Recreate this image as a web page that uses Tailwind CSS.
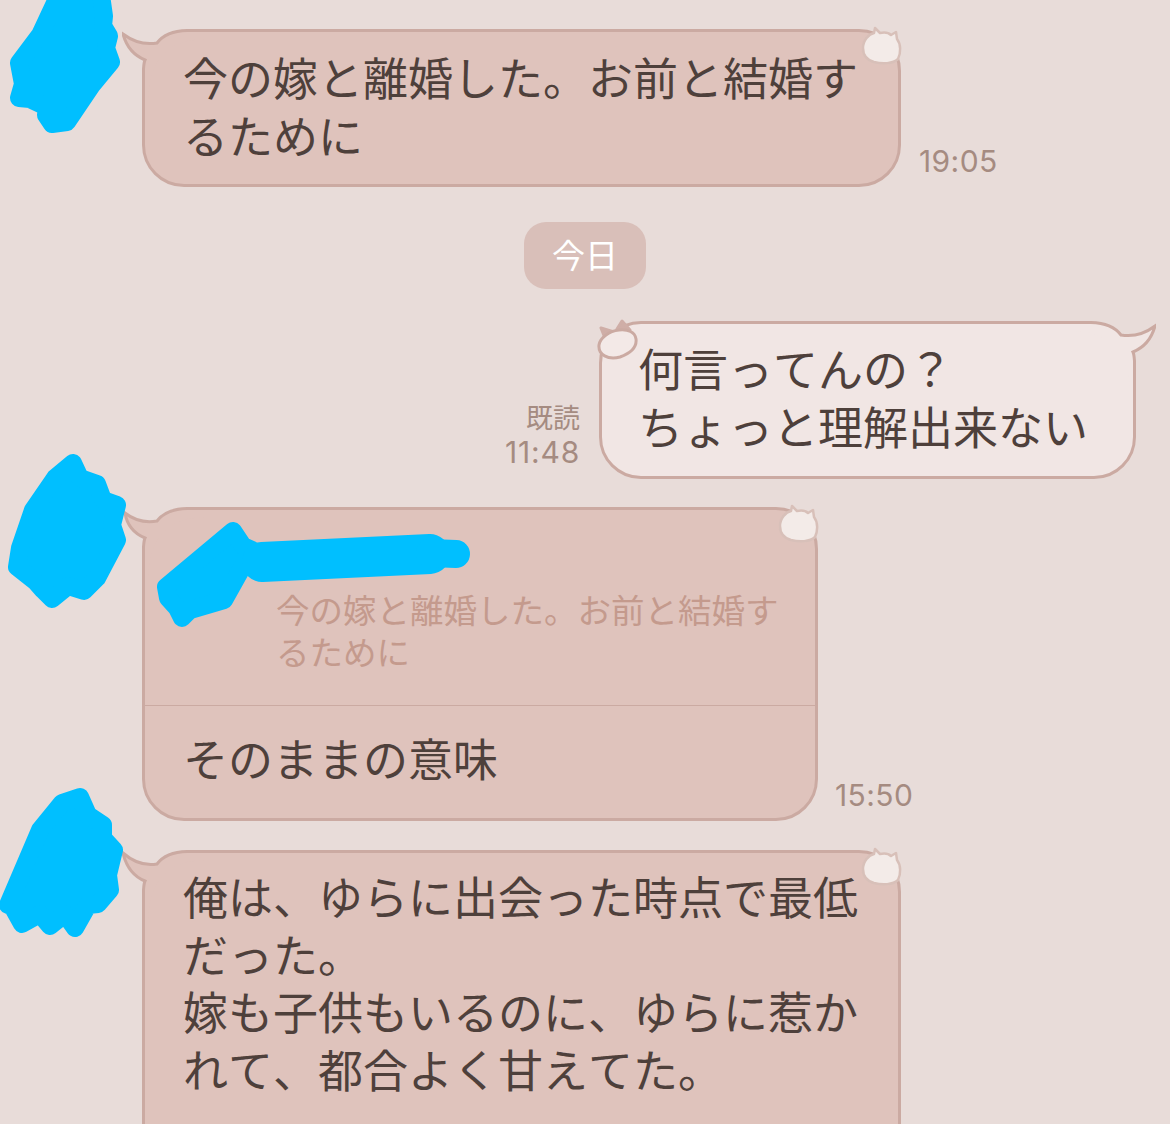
<!DOCTYPE html>
<html lang="ja">
<head>
    <meta charset="UTF-8">
    <title>Chat</title>
    <script src="https://cdn.jsdelivr.net/npm/@tailwindcss/browser@4"></script>
</head>
<body class="bg-[#e8dcd9]">
<div class="relative w-[1170px] h-[1124px] overflow-hidden flex flex-col pt-[29px] font-['Noto_Sans_CJK_JP','Noto_Sans',sans-serif] text-[#4e403b] [font-kerning:none] [text-spacing-trim:space-all]">

    <!-- message 1 -->
    <div class="flex items-end pl-[142px]">
        <div class="relative w-[759px] h-[158px] bg-[#dfc3bc] border-[3px] border-[#cbaaa2] rounded-[42px] rounded-tl-[60px] pl-[38px] pt-[16px] text-[45px] leading-[57.5px] whitespace-nowrap">
            <svg class="absolute left-[-23px] top-[-3px]" width="90" height="72" viewBox="0 0 90 72"><path d="M21.5 70 L21.5 40 Q22 33 23 31 Q6 24 1 5 Q17 17 35 14 Q44 2 65 1.5 L85 1.5 L85 10 Q28 10 26 70 Z" fill="#dfc3bc"/><path d="M21.5 70 L21.5 40 Q22 33 23 31 Q6 24 1 5 Q17 17 35 14 Q44 2 65 1.5 L85 1.5" fill="none" stroke="#cbaaa2" stroke-width="3"/></svg>
            <svg class="absolute right-[-6px] top-[-6px]" width="44" height="40" viewBox="0 0 44 40"><path d="M3 22 C3 14 9 8 14 7 L15 2 L20 7 C25 6 29 7 31 9 L36 6 L37 13 C41 18 41 27 38 33 C33 38 22 38 14 36 C7 34 3 29 3 22 Z" fill="#f3ebe8" stroke="#d8c0b9" stroke-width="2.5" stroke-linejoin="round"/></svg>
            <p class="relative">今の嫁と離婚した。お前と結婚す<br>るために</p>
        </div>
        <span class="ml-[18px] mb-[9px] font-['Inter'] text-[30px] leading-[34px] tracking-[0.4px] text-[#a58b81]">19:05</span>
    </div>

    <!-- date -->
    <div class="flex justify-center mt-[35px]">
        <div class="w-[122px] h-[67px] rounded-[22px] bg-[#d9bfb9] text-white text-[33px] leading-[64px] text-center">今日</div>
    </div>

    <!-- my message -->
    <div class="flex items-end justify-end pr-[34px] mt-[32px]">
        <div class="flex flex-col items-end mr-[19px] mb-[9px] text-[#a58b81]">
            <span class="text-[27px] leading-[34px]">既読</span>
            <span class="font-['Inter'] text-[30px] leading-[36px] tracking-[0.8px]">11:48</span>
        </div>
        <div class="relative w-[537px] h-[158px] bg-[#f1e6e4] border-[3px] border-[#cbaaa2] rounded-[42px] rounded-tr-[60px] pl-[36px] pt-[15px] text-[45px] leading-[57.5px] whitespace-nowrap">
            <svg class="absolute right-[-23px] top-[-3px] -scale-x-100" width="90" height="72" viewBox="0 0 90 72"><path d="M21.5 70 L21.5 40 Q22 33 23 31 Q6 24 1 5 Q17 17 35 14 Q44 2 65 1.5 L85 1.5 L85 10 Q28 10 26 70 Z" fill="#f1e6e4"/><path d="M21.5 70 L21.5 40 Q22 33 23 31 Q6 24 1 5 Q17 17 35 14 Q44 2 65 1.5 L85 1.5" fill="none" stroke="#cbaaa2" stroke-width="3"/></svg>
            <svg class="absolute left-[-5px] top-[-5px]" width="46" height="44" viewBox="0 0 46 44"><path d="M4 9 L17 13 L8 19 Z M25 2 L20 10 L33 11 Z" fill="#cfaea7" stroke="#cfaea7" stroke-width="3" stroke-linejoin="round"/><path d="M2 26 C3 19 12 12 22 11 C31 10 38 13 39 20 C40 28 34 34 23 38 C11 41 1 36 2 26 Z" fill="#f3e9e7" stroke="#cbaaa2" stroke-width="3"/></svg>
            <p class="relative">何言ってんの？<br>ちょっと理解出来ない</p>
        </div>
    </div>

    <!-- message 3 with reply -->
    <div class="flex items-end pl-[142px] mt-[28px]">
        <div class="relative w-[676px] h-[314px] bg-[#dfc3bc] border-[3px] border-[#cbaaa2] rounded-[42px] rounded-tl-[60px] whitespace-nowrap">
            <svg class="absolute left-[-23px] top-[-3px]" width="90" height="72" viewBox="0 0 90 72"><path d="M21.5 70 L21.5 40 Q22 33 23 31 Q6 24 3 6 Q17 17 35 14 Q44 2 65 1.5 L85 1.5 L85 10 Q28 10 26 70 Z" fill="#dfc3bc"/><path d="M21.5 70 L21.5 40 Q22 33 23 31 Q6 24 3 6 Q17 17 35 14 Q44 2 65 1.5 L85 1.5" fill="none" stroke="#cbaaa2" stroke-width="3"/></svg>
            <svg class="absolute right-[-6px] top-[-6px]" width="44" height="40" viewBox="0 0 44 40"><path d="M3 22 C3 14 9 8 14 7 L15 2 L20 7 C25 6 29 7 31 9 L36 6 L37 13 C41 18 41 27 38 33 C33 38 22 38 14 36 C7 34 3 29 3 22 Z" fill="#f3ebe8" stroke="#d8c0b9" stroke-width="2.5" stroke-linejoin="round"/></svg>
            <div class="relative h-[196px] -mx-[3px] border-b border-[#cbaaa2] pl-[134px] pt-[78px] text-[33.5px] leading-[42px] text-[#c49a8d]">
                <p>今の嫁と離婚した。お前と結婚す<br>るために</p>
            </div>
            <p class="relative pl-[38px] pt-[23px] text-[45px] leading-[57.5px]">そのままの意味</p>
        </div>
        <span class="ml-[17px] mb-[9px] font-['Inter'] text-[30px] leading-[34px] tracking-[0.4px] text-[#a58b81]">15:50</span>
    </div>

    <!-- message 4, runs past the bottom -->
    <div class="flex items-start pl-[142px] mt-[29px]">
        <div class="relative w-[759px] h-[320px] shrink-0 bg-[#dfc3bc] border-[3px] border-[#cbaaa2] rounded-[42px] rounded-tl-[60px] pl-[38px] pt-[14px] text-[45px] leading-[57.5px] whitespace-nowrap">
            <svg class="absolute left-[-23px] top-[-3px]" width="90" height="72" viewBox="0 0 90 72"><path d="M21.5 70 L21.5 40 Q22 33 23 31 Q6 24 1 3 Q17 17 35 14 Q44 2 65 1.5 L85 1.5 L85 10 Q28 10 26 70 Z" fill="#dfc3bc"/><path d="M21.5 70 L21.5 40 Q22 33 23 31 Q6 24 1 3 Q17 17 35 14 Q44 2 65 1.5 L85 1.5" fill="none" stroke="#cbaaa2" stroke-width="3"/></svg>
            <svg class="absolute right-[-6px] top-[-6px]" width="44" height="40" viewBox="0 0 44 40"><path d="M3 22 C3 14 9 8 14 7 L15 2 L20 7 C25 6 29 7 31 9 L36 6 L37 13 C41 18 41 27 38 33 C33 38 22 38 14 36 C7 34 3 29 3 22 Z" fill="#f3ebe8" stroke="#d8c0b9" stroke-width="2.5" stroke-linejoin="round"/></svg>
            <p class="relative">俺は、ゆらに出会った時点で最低<br>だった。<br>嫁も子供もいるのに、ゆらに惹か<br>れて、都合よく甘えてた。</p>
        </div>
    </div>

    <!-- blue marker scribbles over names and avatars -->
    <svg class="absolute inset-0" width="1170" height="1124" viewBox="0 0 1170 1124">
        <g fill="#00bfff" stroke="#00bfff" stroke-width="18" stroke-linejoin="round" stroke-linecap="round">
            <path d="M62 -12 L100 -12 L104 16 L103 26 L109 36 L106 48 L111 62 L92 85 L67 122 L52 124 L46 115 L47 107 L30 99 L19 98 L23 84 L19 63 L40 35 Z"/>
            <path d="M73 463 L80 478 L97 484 L103 500 L117 505 L112 525 L117 540 L97 578 L84 591 L68 586 L52 599 L43 590 L36 582 L17 567 L20 548 L33 510 L55 478 Z"/>
            <path d="M166 587 L233 531 L243 546 L252 550 L224 600 L190 610 L182 618 L177 608 L168 598 Z"/>
            <path d="M80 797 L88 815 L103 825 L103 838 L114 850 L108 875 L110 890 L98 904 L88 905 L75 928 L65 914 L50 926 L40 914 L22 924 L12 906 L8 905 L40 830 L62 803 Z"/>
            <path d="M262 562 L430 554" stroke-width="40"/>
            <path d="M430 553 L456 554" stroke-width="28"/>
        </g>
    </svg>
</div>
</body>
</html>
